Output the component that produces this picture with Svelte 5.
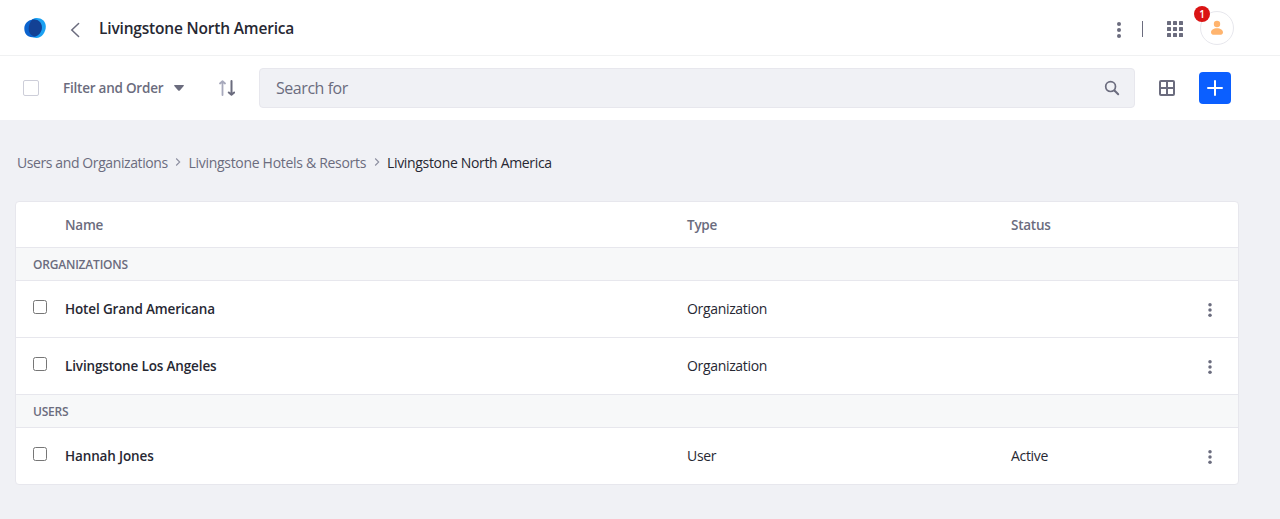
<script>
  const crumbs = [
    { label: 'Users and Organizations', cls: 'c1' },
    { label: 'Livingstone Hotels & Resorts', cls: 'c2' },
  ];
  const groups = [
    {
      title: 'ORGANIZATIONS',
      rows: [
        { name: 'Hotel Grand Americana', type: 'Organization', status: '' },
        { name: 'Livingstone Los Angeles', type: 'Organization', status: '' },
      ],
    },
    {
      title: 'USERS',
      rows: [{ name: 'Hannah Jones', type: 'User', status: 'Active' }],
    },
  ];
</script>

{#snippet dots(size)}
  <svg width={size} height={size} viewBox="0 0 16 16" fill="#6b6c7e">
    <circle cx="8" cy="2" r="2" /><circle cx="8" cy="8" r="2" /><circle cx="8" cy="14" r="2" />
  </svg>
{/snippet}

<div class="page">
  <header>
    <svg class="logo" width="24" height="24" viewBox="0 0 24 24">
      <path d="M13 2c5-.4 9.800 3 9.800 8.500 0 6-4.300 11.500-9.300 11.500-4.500 0-7.800-3.500-7.800-8.500C5.700 7.500 8.500 2.400 13 2z" fill="#1ba1f2" />
      <path d="M9.500 3.500c5-.8 9.300 2.700 9.300 8 0 5.500-4.300 9.700-9.500 9.700-5 0-8-3.700-8-8.700 0-4.800 3.500-8.300 8.200-9z" fill="#0b63ce" />
      <path d="M9.300 3.600c5.200-1 9.600 2.400 9.600 7.600 0 4.300-3 8.300-7.100 9.300-3.900-1-6.100-3.500-6.100-7.500 0-3.600 1.400-7 3.600-9.400z" fill="#134194" />
    </svg>
    <svg class="back" width="16" height="16" viewBox="0 0 16 16" fill="none" stroke="#6b6c7e" stroke-width="1.500" stroke-linecap="round"><path d="M11.600 1.500 4.800 8l6.800 6.500" /></svg>
    <h1>Livingstone North America</h1>
    <div class="right">
      <span class="menu">{@render dots(16)}</span>
      <span class="divider"></span>
      <svg class="apps" width="16" height="16" viewBox="0 0 16 16" fill="#6b6c7e">
        {#each [0, 6, 12] as y}{#each [0, 6, 12] as x}<rect {x} {y} width="4" height="4" rx=".6" />{/each}{/each}
      </svg>
      <div class="avatar">
        <svg width="16" height="16" viewBox="0 0 16 16" fill="#ffb46e"><circle cx="8" cy="4" r="3.200" /><path d="M2 12.200C2 10 4.500 8.200 8 8.200s6 1.800 6 4c0 2-1.500 2.600-3 2.600H5c-1.500 0-3-.6-3-2.600z" /></svg>
        <span class="badge">1</span>
      </div>
    </div>
  </header>

  <div class="toolbar">
    <span class="select-all"></span>
    <span class="filter">Filter and Order</span>
    <svg class="caret" width="10" height="6" viewBox="0 0 10 6" fill="#6b6c7e"><path d="M.7 0h8.600q1 .3.400 1L5.800 5.400q-.8.800-1.600 0L.3 1Q-.2.300.7 0z" /></svg>
    <svg class="sort" width="16" height="16" viewBox="0 0 16 16" fill="none" stroke-width="2" stroke-linecap="round" stroke-linejoin="round">
      <path d="M3.500 15V1.500M1 3.500l2.500-2.300L6 3.500" stroke="#a7a9bc" stroke-width="1.800" />
      <path d="M12.500 1v13M9.800 12.500l2.700 2.300 2.700-2.300" stroke="#6b6c7e" />
    </svg>
    <div class="search">
      <span>Search for</span>
      <svg width="16" height="16" viewBox="0 0 16 16" fill="none" stroke="#6b6c7e"><circle cx="6.600" cy="6.600" r="4.900" stroke-width="1.700" /><path d="m10.500 10.500 3.700 3.700" stroke-width="2" stroke-linecap="round" /></svg>
    </div>
    <svg class="grid" width="16" height="16" viewBox="0 0 16 16" fill="none" stroke="#6b6c7e" stroke-width="2"><rect x="1" y="1" width="14" height="14" rx="1" /><path d="M8 1v14M1 8h14" /></svg>
    <div class="add"><svg width="16" height="16" viewBox="0 0 16 16" stroke="#fff" stroke-width="2" stroke-linecap="round"><path d="M8 1v14M1 8h14" /></svg></div>
  </div>

  <nav>
    {#each crumbs as c}
      <span class={c.cls}>{c.label}</span>
      <svg width="6" height="8" viewBox="0 0 6 8" fill="none" stroke="#8d8fa0" stroke-width="1.100"><path d="m1.200.5 3.500 3.500-3.500 3.500" /></svg>
    {/each}
    <span class="current">Livingstone North America</span>
  </nav>

  <div class="table">
    <div class="row head">
      <span></span><span>Name</span><span>Type</span><span>Status</span>
    </div>
    {#each groups as g}
      <div class="section">{g.title}</div>
      {#each g.rows as r}
        <div class="row item">
          <span class="check"></span>
          <span class="name">{r.name}</span>
          <span>{r.type}</span>
          <span>{r.status}</span>
          <span class="more">{@render dots(14)}</span>
        </div>
      {/each}
    {/each}
  </div>
</div>

<style>
  :global(body) { margin: 0; background: #f0f1f5; }
  .page { height: 519px; overflow: hidden; background: #f0f1f5; font: 14px/20px "Open Sans", "Noto Sans", sans-serif; color: #272833; white-space: nowrap; }
  svg { display: block; flex: none; }
  header { height: 55px; display: flex; align-items: center; background: #fff; border-bottom: 1px solid #f0f1f2; }
  .logo { margin-left: 23px; }
  .back { margin: 5px 0 0 20px; }
  h1 { margin: 1px 0 0 16px; font-size: 15.500px; line-height: 24px; font-weight: 600; letter-spacing: -.18px; }
  .right { display: flex; align-items: center; margin-left: auto; margin-right: 46px; }
  .menu { margin: 5px 15px 0 0; }
  .divider { width: 1px; height: 16px; margin-top: 3px; background: #6b6c7e; }
  .apps { margin: 3px 17px 0 24px; }
  .avatar { position: relative; box-sizing: border-box; width: 34px; height: 34px; margin-top: 1px; border: 1px solid #e7e7ed; border-radius: 50%; display: flex; align-items: center; justify-content: center; }
  .badge { position: absolute; left: -7px; top: -6px; width: 16px; height: 16px; border-radius: 50%; background: #da1414; color: #fff; font-size: 10px; font-weight: 600; line-height: 16px; text-align: center; }

  .toolbar { height: 64px; display: flex; align-items: center; background: #fff; }
  .select-all { box-sizing: border-box; width: 16px; height: 16px; margin-left: 23px; border: 1px solid #cdced9; border-radius: 2px; }
  .filter { width: 100px; margin-left: 24px; color: #6b6c7e; font-size: 13.500px; font-weight: 600; letter-spacing: -.23px; }
  .caret { margin-left: 11px; }
  .sort { margin-left: 35px; }
  .search { box-sizing: border-box; width: 876px; height: 40px; margin-left: 24px; padding: 0 14px 0 16px; border: 1px solid #e7e7ed; border-radius: 4px; background: #f0f1f5; color: #6b6c7e; font-size: 16px; display: flex; align-items: center; justify-content: space-between; letter-spacing: -.45px; }
  .grid { margin-left: 24px; }
  .add { width: 32px; height: 32px; margin-left: 24px; border-radius: 4px; background: #0b5fff; display: flex; align-items: center; justify-content: center; }

  nav { display: flex; align-items: center; height: 20px; padding: 33px 0 28px 17px; color: #6b6c7e; }
  nav svg { margin: -2px 7px 0 8px; }
  .c1 { width: 150px; letter-spacing: -.4px; }
  .c2 { width: 177px; margin-left: .5px; margin-right: .5px; letter-spacing: -.3px; }
  .current { color: #272833; letter-spacing: -.33px; }

  .table { box-sizing: border-box; width: 1224px; height: 284px; margin-left: 15px; border: 1px solid #e7e7ed; border-radius: 4px; background: #fff; overflow: hidden; }
  .row { box-sizing: border-box; display: grid; grid-template-columns: 49px 622px 324px 1fr 35px; align-items: center; border-bottom: 1px solid #e7e7ed; letter-spacing: -.33px; }
  .head { height: 46px; padding-top: 1px; color: #6b6c7e; font-size: 13.500px; font-weight: 600; letter-spacing: -.24px; }
  .section { box-sizing: border-box; height: 33px; padding-left: 17px; background: #f7f8f9; border-bottom: 1px solid #e7e7ed; color: #6b6c7e; font-size: 12px; font-weight: 600; line-height: 33px; letter-spacing: -.2px; }
  .item { height: 57px; }
  .check { box-sizing: border-box; width: 14px; height: 14px; margin: -4px 0 0 17px; border: 1px solid #767676; border-radius: 2.500px; }
  .name { font-size: 13.500px; font-weight: 600; letter-spacing: -.14px; }
  .more { margin-top: 2px; }
</style>
